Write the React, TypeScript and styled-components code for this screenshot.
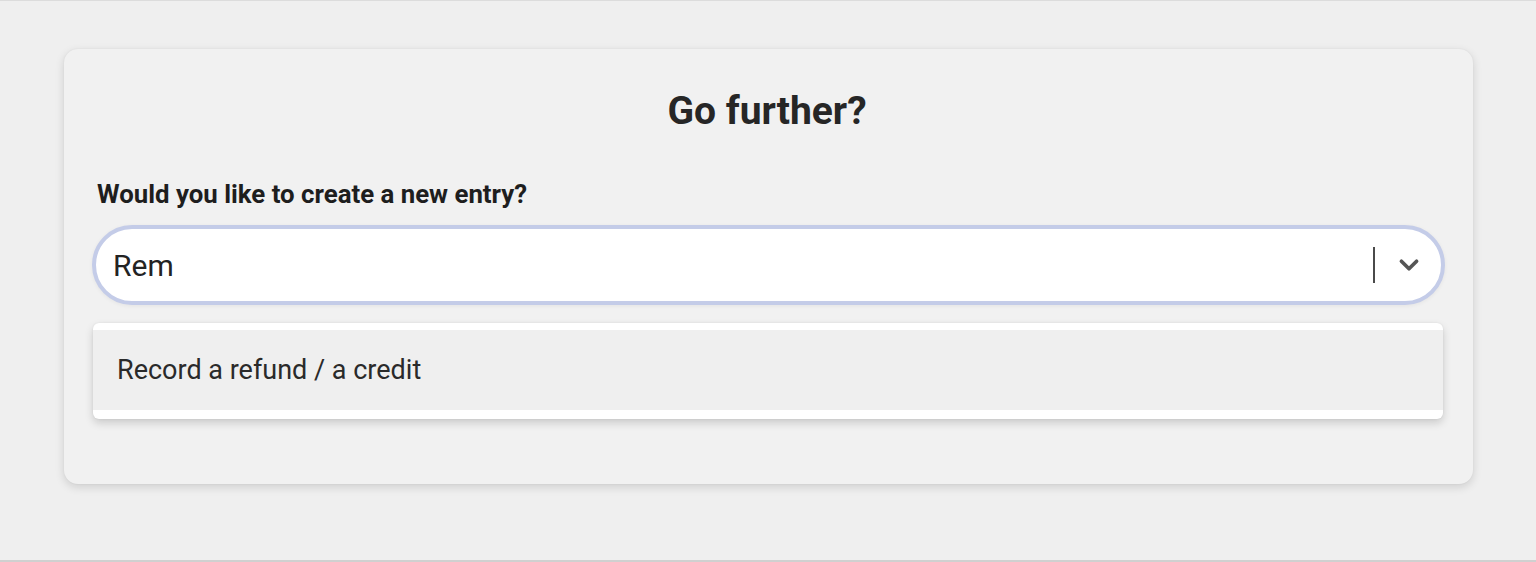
import React, { useState } from "react";
import styled, { createGlobalStyle } from "styled-components";

const GlobalStyle = createGlobalStyle`
	html, body {
		margin: 0;
		padding: 0;
		background: #efefef;
		font-family: Roboto, "Liberation Sans", Arial, sans-serif;
	}
`;

const Page = styled.div`
	box-sizing: border-box;
	height: 562px;
	border-top: 1px solid #dcdcdc;
	border-bottom: 2px solid #d0d0d0;
	background: #efefef;
	padding: 48px 63px 0 64px;
`;

const Card = styled.div`
	box-sizing: border-box;
	height: 435px;
	background: #f1f1f1;
	border-radius: 14px;
	box-shadow: 0 3px 10px rgba(0, 0, 0, 0.14), 0 0 2px rgba(0, 0, 0, 0.06);
	padding: 40px 28px 0 28px;
	display: flex;
	flex-direction: column;
`;

const Title = styled.h1`
	margin: 0 0 0 -3px;
	text-align: center;
	font-size: 39px;
	line-height: 44px;
	font-weight: 700;
	color: #262626;
`;

const Label = styled.label`
	margin: 46px 0 0 5px;
	font-size: 25.8px;
	line-height: 30px;
	font-weight: 700;
	color: #1e1e1e;
`;

const SelectBox = styled.div`
	box-sizing: border-box;
	margin-top: 16px;
	height: 80px;
	background: #fff;
	border: 4px solid #c4cce8;
	border-radius: 40px;
	display: flex;
	align-items: center;
	padding: 0 19px 0 17px;
	box-shadow: 0 1px 4px rgba(0, 0, 0, 0.06);
`;

const Input = styled.input`
	flex: 1;
	border: none;
	outline: none;
	background: transparent;
	font-family: inherit;
	font-size: 30px;
	color: #232323;
	padding: 0;
`;

const Separator = styled.span`
	width: 2px;
	height: 36px;
	background: #4a4a4a;
	margin-right: 21px;
`;

const Chevron = styled.svg`
	width: 26px;
	height: 26px;
	color: #555;
`;

const Menu = styled.div`
	margin: 18px 2px 0 1px;
	background: #fff;
	border-radius: 6px;
	padding: 7px 0 9px;
	box-shadow: 0 4px 8px rgba(0, 0, 0, 0.16), 0 0 2px rgba(0, 0, 0, 0.08);
`;

const Option = styled.div`
	height: 80px;
	display: flex;
	align-items: center;
	padding-left: 24px;
	background: #efefef;
	font-size: 27px;
	color: #2a2a2a;
`;

const App = () => {
	const [value, setValue] = useState("Rem");

	return (
		<>
			<GlobalStyle />
			<Page>
				<Card>
					<Title>Go further?</Title>
					<Label>Would you like to create a new entry?</Label>
					<SelectBox>
						<Input value={value} onChange={e => setValue(e.target.value)} />
						<Separator />
						<Chevron viewBox="0 0 24 24" fill="none" stroke="currentColor" strokeWidth="3.4" strokeLinecap="round" strokeLinejoin="round">
							<path d="M5 8.5l7 7 7-7" />
						</Chevron>
					</SelectBox>
					<Menu>
						<Option>Record a refund / a credit</Option>
					</Menu>
				</Card>
			</Page>
		</>
	);
};

export default App;
